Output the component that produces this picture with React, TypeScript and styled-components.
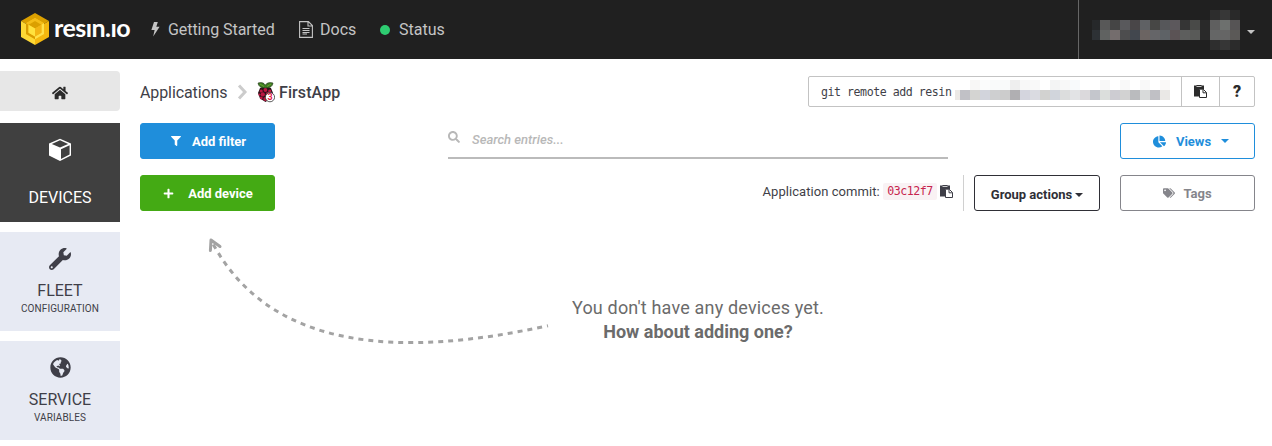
import React from 'react';
import styled, { createGlobalStyle } from 'styled-components';
import { FaHome, FaWrench, FaGlobeAmericas, FaSearch, FaFilter, FaPlus, FaChartPie, FaTags } from 'react-icons/fa';

const GlobalStyle = createGlobalStyle`
  * { box-sizing: border-box; }
  body { margin: 0; background: #fff; color: #3f3f48; font-family: Roboto, 'Liberation Sans', sans-serif; font-size: 16px; }
  svg { display: block; flex: none; }
  button { font-family: inherit; }
`;

const Header = styled.header`
  height: 59px;
  display: flex;
  background: #202020;
  color: #c4c4c4;
`;
const Brand = styled.a`
  display: flex;
  align-items: flex-start;
  width: 134px;
  padding: 13px 0 0 21px;
`;
const Wordmark = styled.span`
  position: relative;
  margin-left: 5px;
  white-space: nowrap;
  color: #fff;
  font: 700 25px/28px Lato, sans-serif;
  letter-spacing: -0.55px;
  /* the wordmark is drawn with dotless letters */
  &::before {
    content: '';
    position: absolute;
    left: 0;
    right: 0;
    top: 0;
    height: 9px;
    background: #202020;
  }
`;
const Nav = styled.nav`
  display: flex;
  flex: 1;
  padding-left: 17px;
`;
const NavLink = styled.a<{ $w: number; $gap: number; $track?: number }>`
  width: ${p => p.$w}px;
  display: flex;
  align-items: center;
  gap: ${p => p.$gap}px;
  letter-spacing: ${p => p.$track ?? 0}px;
  white-space: nowrap;
`;
const Dot = styled.i`
  width: 10px;
  height: 10px;
  border-radius: 50%;
  background: #2ecc71;
`;
const Account = styled.div`
  width: 194px;
  border-left: 1px solid #666;
  display: flex;
  align-items: center;
  padding-left: 13px;
`;
const Mosaic = styled.div<{ $cols: string; $rows: number; $lift?: number }>`
  display: grid;
  flex: none;
  margin-bottom: ${p => p.$lift ?? 0}px;
  grid-template-columns: ${p => p.$cols};
  grid-template-rows: repeat(${p => p.$rows}, 10px);
`;
const Cell = styled.i<{ $c: string }>`
  background: ${p => p.$c};
`;
const Caret = styled.i<{ $ml: number; $mt?: number }>`
  margin-left: ${p => p.$ml}px;
  margin-top: ${p => p.$mt ?? 0}px;
  border: 4px solid transparent;
  border-top-color: currentColor;
  border-bottom: 0;
`;
const Layout = styled.div`
  display: flex;
  padding-top: 12px;
`;
const Sidebar = styled.aside`
  width: 120px;
  flex: none;
  display: flex;
  flex-direction: column;
  gap: 10px;
`;
const HomeTab = styled.a`
  height: 40px;
  margin-bottom: 2px;
  display: flex;
  align-items: center;
  justify-content: center;
  padding-top: 3px;
  border-radius: 0 4px 4px 0;
  background: #e7e7e7;
  color: #2b2b2b;
`;
const Tab = styled.a<{ $active?: boolean }>`
  height: 99px;
  display: flex;
  flex-direction: column;
  align-items: center;
  padding-top: ${p => (p.$active ? 15 : 16)}px;
  background: ${p => (p.$active ? '#404040' : '#e7eaf3')};
  color: ${p => (p.$active ? '#fff' : '#3f3f48')};
`;
const TabTitle = styled.span<{ $mt: number }>`
  margin-top: ${p => p.$mt}px;
  font-size: 16px;
  line-height: 20px;
`;
const TabSub = styled.small`
  font-size: 10px;
  line-height: 16px;
  letter-spacing: 0.1px;
`;
const Main = styled.main`
  flex: 1;
  padding: 0 17px 0 20px;
`;
const Crumbs = styled.div`
  height: 42px;
  display: flex;
  align-items: center;
  white-space: nowrap;
`;
const AppsLink = styled.a`
  width: 97px;
  letter-spacing: -0.1px;
`;
const AppName = styled.span`
  margin-left: 4px;
  font-weight: 500;
  letter-spacing: 0.1px;
`;
const GitBox = styled.div`
  margin: 0 0 1px auto;
  width: 447px;
  height: 31px;
  display: flex;
  border: 1px solid #c3c3c3;
  border-radius: 2px;
  font: 11.6px 'DejaVu Sans Mono', monospace;
`;
const GitText = styled.span`
  width: 372px;
  display: flex;
  align-items: center;
  padding-left: 12px;
  white-space: pre;
`;
const GitCommand = styled.span`
  width: 134px;
  letter-spacing: -0.46px;
`;
const GitButton = styled.span<{ $w: number }>`
  width: ${p => p.$w}px;
  border-left: 1px solid #c3c3c3;
  display: flex;
  align-items: center;
  justify-content: center;
  color: #2b2b2b;
  font: 900 16px Roboto, sans-serif;
`;
const Row = styled.div<{ $mt: number }>`
  margin-top: ${p => p.$mt}px;
  height: 36px;
  display: flex;
  white-space: nowrap;
`;
const Button = styled.button<{ $w: number; $bg?: string; $color: string; $gap?: number; $pt?: number; $pl?: number; $ml?: number }>`
  width: ${p => p.$w}px;
  height: 36px;
  flex: none;
  margin-left: ${p => p.$ml ?? 0}px;
  padding: ${p => p.$pt ?? 0}px 0 0 ${p => p.$pl ?? 0}px;
  display: flex;
  align-items: center;
  justify-content: center;
  gap: ${p => p.$gap ?? 0}px;
  border: 1px solid ${p => p.$bg ?? p.$color};
  border-radius: 3px;
  background: ${p => p.$bg ?? '#fff'};
  color: ${p => p.$color};
  font-size: 13px;
  font-weight: 700;
`;
const Search = styled.label`
  width: 500px;
  margin: 0 172px 0 173px;
  border-bottom: 2px solid #bbb;
  display: flex;
  color: #b8b8b8;
  padding-top: 8px;
`;
const Placeholder = styled.span`
  margin: 1px 0 0 12px;
  font-size: 13px;
  font-style: italic;
  font-weight: 500;
`;
const Commit = styled.div`
  display: flex;
  align-items: center;
  margin-left: auto;
  padding: 0 10px 3px 0;
  margin-right: 10px;
  border-right: 1px solid #d0d0d0;
  font-size: 13px;
`;
const CommitLabel = styled.span`
  width: 120.5px;
  letter-spacing: 0.06px;
`;
const Hash = styled.code`
  height: 17px;
  width: 54px;
  margin-right: 3px;
  border-radius: 2px;
  background: #f9f2f4;
  color: #c7254e;
  text-align: center;
  font: 11.6px/17px 'DejaVu Sans Mono', monospace;
  letter-spacing: -0.46px;
`;
const Empty = styled.section`
  display: flex;
  margin-top: 26px;
  padding-left: 65px;
`;
const Message = styled.p`
  width: 264px;
  margin: 59px 0 0 16px;
  color: #6b6b6b;
  text-align: center;
  font-size: 18px;
  line-height: 24px;
  letter-spacing: 0.17px;
`;
const Prompt = styled.b`
  letter-spacing: 0;
`;

const Logo = () => (
  <svg width="28" height="32" viewBox="0 0 28 32">
    <path d="M14 0 28 8 14 16 0 8z" fill="#dba000" />
    <path d="M0 8 14 16V32L0 24z" fill="#fdd835" />
    <path d="M28 8 14 16V32L28 24z" fill="#f5b80f" />
    <path d="M14 5 23 10.3V21L14 26.2 5 21V10.3z" fill="#f9c51c" />
    <path d="M5 10.3 14 5 23 10.3 20.5 11.7 14 8 7.5 11.7z" fill="#f5bd18" />
    <path d="M5 10.3V21L14 26.2V23.5L7.5 19.7V11.7z" fill="#d99c00" />
    <path d="M23 10.3V21L14 26.2V23.5L20.5 19.7V11.7z" fill="#ffe04a" />
    <path d="M14 8 20.5 11.7 14 15.5 7.5 11.7z" fill="#dba000" />
    <path d="M7.5 11.7 14 15.5V23.5L7.5 19.7z" fill="#ffe23e" />
    <path d="M20.5 11.7 14 15.5V23.5L20.5 19.7z" fill="#f3b514" />
  </svg>
);
const Bolt = () => (
  <svg width="9" height="15" viewBox="0 0 9 15">
    <path d="M3 0H6.8L5.3 4.8H8.6L2.2 14.6 3.6 8H.4z" fill="currentColor" />
  </svg>
);
const DocIcon = () => (
  <svg width="14" height="17" viewBox="0 0 14 17" fill="none" stroke="currentColor">
    <path d="M.6.6H9.4L13.4 4.6V16.4H.6zM9 1V5H13" strokeWidth="1.1" />
    <path d="M3.5 7.5H10.5M3.5 9.5H10.5M3.5 11.5H10.5M3.5 13H8" />
  </svg>
);
const Cube = () => (
  <svg width="25" height="24" viewBox="0 0 25 24">
    <path d="M1 5.5 12 .7 23 5.5V17.5L12 23 1 17.5z" fill="currentColor" />
    <path d="M3.8 5.9 12 2.3 20.2 5.9 12 9.5zM13 11.2 21.6 7.3V16.6L13 20.9z" fill="#404040" />
  </svg>
);
const PasteIcon = () => (
  <svg width="13" height="13" viewBox="0 0 13 13">
    <path d="M0 .5H2.5V0H7.5V.5H10V4H5V11.5H0z" fill="currentColor" />
    <path d="M2.5 1.5H7.5" stroke="#ddd" strokeWidth=".9" />
    <path d="M5.5 4.2H9.2L12.5 7.5V12.5H5.5z" fill="#fff" stroke="currentColor" />
    <path d="M9 4.5V7.8H12.3" fill="none" stroke="currentColor" />
  </svg>
);
const Raspberry = () => (
  <svg width="18" height="21" viewBox="0 0 18 21">
    <path d="M3 6Q8 3 14 6L16 11 14.5 16 8.5 20 3 16.5 1 11z" fill="#2b1119" />
    <path d="M1 1Q6-.5 8.3 3 11-.5 16 1 15.5 6 8.5 6 1.5 6 1 1z" fill="#3f7a26" stroke="#233517" strokeWidth=".6" />
    <path d="M3 2 7 4.5M14 2 10 4.5" stroke="#65a82d" />
    <g fill="#bd1742">
      <circle cx="8.4" cy="8" r="1.9" /><circle cx="4.2" cy="9" r="1.6" /><circle cx="12.7" cy="9" r="1.6" />
      <circle cx="5.8" cy="12.4" r="2.1" /><circle cx="11" cy="12.2" r="2.1" /><circle cx="2.5" cy="12.7" r="1.1" />
      <circle cx="4.3" cy="16" r="1.4" /><circle cx="8.3" cy="17" r="2" />
    </g>
    <circle cx="13" cy="15.2" r="4.6" fill="#fff" stroke="#333" strokeWidth=".8" />
    <text x="13" y="18.4" textAnchor="middle" fontSize="9" fontWeight="700" fill="#e0204a">3</text>
  </svg>
);
const Arrow = () => (
  <svg width="345" height="110" viewBox="205 237 345 110" fill="none" stroke="#a3a3a3" strokeWidth="3">
    <path d="M548 325.7C400 358 270 351 212 242" strokeDasharray="5 5" strokeDashoffset="4" />
    <path d="M210.4 250.5 211 240 220 246.5" strokeLinecap="round" strokeLinejoin="round" />
  </svg>
);

const userCells = [
  '#26282a', '#585858', '#454545', '#59595c', '#494648', '#5f6164', '#474745', '#56575a', '#5c585c', '#353535', '#494a48', '#292929',
  '#2d3135', '#606261', '#746d6d', '#4d4d4e', '#42474e', '#6b6462', '#656568', '#5e6266', '#5b5355', '#5d5e5d', '#595a58', '#292929',
];
const avatarCells = ['#2d2d2d', '#373737', '#292929', '#5f5f5f', '#6d706e', '#565455', '#656666', '#656565', '#5b5957', '#2e2e2e', '#363636', '#2b2b2b'];
const urlCells = [
  '#fff', '#fff', '#f8f7f6', '#fbfcfc', '#f9fafa', '#f9fafa', '#eeeeee', '#f8f8f8', '#f9f9f9', '#fff', '#f3f4f4', '#f8f8f8', '#f8fafc', '#fff', '#fff', '#f8f8f8', '#fff', '#f9f9f9', '#fff', '#f9f9f9', '#fff', '#faf9f8',
  '#ece9e6', '#c1c1c6', '#d4d4d2', '#d2d4dc', '#cecfd0', '#cccccc', '#b0afb2', '#d4d5de', '#dadbe1', '#d2d2d0', '#d1d5dc', '#dcdddd', '#e2e3e5', '#dbd9dc', '#c4c6cc', '#dbdedc', '#cdccd2', '#d2d2d2', '#babbbe', '#d8dada', '#c0c0c5', '#eae8e6',
];
const fill = (cells: string[]) => cells.map((c, i) => <Cell key={i} $c={c} />);

export default function App() {
  return (
    <>
      <GlobalStyle />
      <Header>
        <Brand><Logo /><Wordmark>resin.io</Wordmark></Brand>
        <Nav>
          <NavLink $w={148} $gap={8} $track={-0.06}><Bolt />Getting Started</NavLink>
          <NavLink $w={81} $gap={7}><DocIcon />Docs</NavLink>
          <NavLink $w={80} $gap={9}><Dot />Status</NavLink>
        </Nav>
        <Account>
          <Mosaic $cols="8px repeat(11, 10px)" $rows={2}>{fill(userCells)}</Mosaic>
          <Mosaic $cols="repeat(3, 10px)" $rows={4}>{fill(avatarCells)}</Mosaic>
          <Caret $ml={7} $mt={5} />
        </Account>
      </Header>
      <Layout>
        <Sidebar>
          <HomeTab><FaHome size={16} /></HomeTab>
          <Tab $active><Cube /><TabTitle $mt={26}>DEVICES</TabTitle></Tab>
          <Tab><FaWrench size={22} /><TabTitle $mt={11}>FLEET</TabTitle><TabSub>CONFIGURATION</TabSub></Tab>
          <Tab><FaGlobeAmericas size={21} /><TabTitle $mt={12}>SERVICE</TabTitle><TabSub>VARIABLES</TabSub></Tab>
        </Sidebar>
        <Main>
          <Crumbs>
            <AppsLink>Applications</AppsLink>
            <svg width="20" height="16" viewBox="0 0 20 16"><path d="M2 1.5 8 8 2 14.5" fill="none" stroke="#ccc" strokeWidth="3" /></svg>
            <Raspberry />
            <AppName>FirstApp</AppName>
            <GitBox>
              <GitText>
                <GitCommand>git remote add resin</GitCommand>
                <Mosaic $cols="5px repeat(21, 10px)" $rows={2} $lift={3}>{fill(urlCells)}</Mosaic>
              </GitText>
              <GitButton $w={38}><PasteIcon /></GitButton>
              <GitButton $w={35}>?</GitButton>
            </GitBox>
          </Crumbs>
          <Row $mt={10}>
            <Button $w={135} $bg="#1f8edb" $color="#fff" $gap={11} $pl={2}><FaFilter size={10} />Add filter</Button>
            <Search><FaSearch size={12} /><Placeholder>Search entries...</Placeholder></Search>
            <Button $w={135} $color="#1f8edb" $gap={10} $pl={7}><FaChartPie size={13} />Views<Caret $ml={0} /></Button>
          </Row>
          <Row $mt={16}>
            <Button $w={135} $bg="#44aa14" $color="#fff" $gap={14} $pl={1}><FaPlus size={11} />Add device</Button>
            <Commit>
              <CommitLabel>Application commit:</CommitLabel>
              <Hash>03c12f7</Hash>
              <PasteIcon />
            </Commit>
            <Button $w={126} $color="#2f2f36" $pt={3}>Group actions<Caret $ml={3} /></Button>
            <Button $w={135} $color="#85858b" $gap={8} $ml={20}><FaTags size={12} />Tags</Button>
          </Row>
          <Empty>
            <Arrow />
            <Message>You don't have any devices yet.<br /><Prompt>How about adding one?</Prompt></Message>
          </Empty>
        </Main>
      </Layout>
    </>
  );
}
